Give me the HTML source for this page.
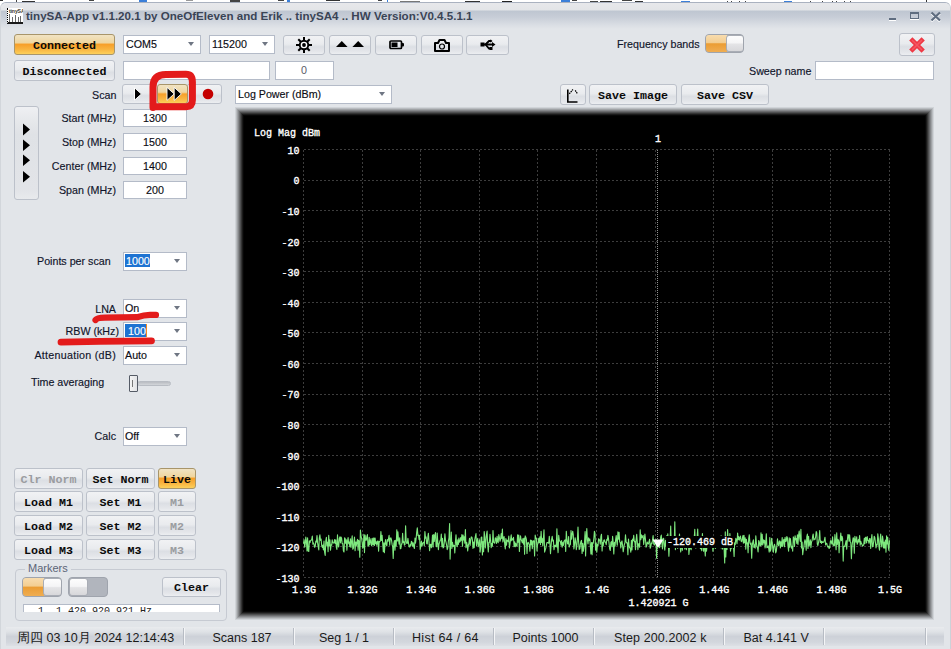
<!DOCTYPE html>
<html><head><meta charset="utf-8">
<style>
*{margin:0;padding:0;box-sizing:border-box}
html,body{width:951px;height:649px;overflow:hidden;background:#fff;font-family:"Liberation Sans",sans-serif}
.a{position:absolute}
#win{position:absolute;left:0;top:2px;width:951px;height:647px;background:#e2e5e9;border-radius:6px 6px 0 0;border-top:1px solid #aab2c0;border-left:1px solid #d2d6db;border-right:1px solid #cdd1d7;overflow:hidden}
#title{position:absolute;left:0;top:0;width:951px;height:26px;background:linear-gradient(#e7e8eb 0px,#e3e5e8 7px,#bec6d1 8px,#c7cdd7 14px,#dadee4 22px,#e2e5e9 26px)}
.btn{position:absolute;border:1px solid #bcc1ca;border-radius:3px;background:linear-gradient(#f1f2f4 0%,#e9ebee 45%,#dcdfe4 60%,#e4e6ea 85%,#eceef1 100%);display:flex;align-items:center;justify-content:center}
.obtn{position:absolute;border:1px solid #a8956a;border-radius:3px;background:linear-gradient(#f1e3c3 0%,#efd6a0 40%,#f7a02a 50%,#f9b440 75%,#fcd05a 100%);display:flex;align-items:center;justify-content:center}
.mono{font-family:"Liberation Mono",monospace;font-weight:700;font-size:11.67px;color:#0a0a0a;white-space:pre;line-height:12px;position:relative;top:1px}
.dis{color:#9a9ca0}
.inp{position:absolute;background:#fff;border:1px solid #b4bbc8}
.lbl{position:absolute;font-size:10.7px;line-height:11px;color:#10142a;white-space:pre;-webkit-text-stroke:0.15px #10142a}
.r{text-align:right}
.val{position:absolute;font-size:10.7px;line-height:11px;color:#0c0c14;white-space:pre;-webkit-text-stroke:0.15px}
.dd:after{content:"";position:absolute;right:6px;top:50%;margin-top:-2.5px;border-left:3.5px solid transparent;border-right:3.5px solid transparent;border-top:4px solid #6f7683}
.tog{position:absolute;border:1px solid #9fa4ad;border-radius:4px;overflow:hidden;background:#b1b5bd}
.tog .on{position:absolute;left:0;top:0;bottom:0;background:linear-gradient(#f8dcae 0%,#f3ce92 44%,#eb9d34 52%,#efad52 100%)}
.tog .knob{position:absolute;top:0;bottom:0;background:linear-gradient(#fdfdfd 0%,#f5f5f6 46%,#e4e4e6 54%,#d8d8db 100%);border:1px solid #a9adb5;border-radius:3px}
.st{position:absolute;top:2px;height:19px;font-size:12.5px;line-height:19px;color:#1a1a1a;white-space:pre}
.sep{position:absolute;top:1px;width:2px;height:17px;border-left:1px solid #b7bcc4;border-right:1px solid #f4f5f7}
</style></head><body>
<!-- top strip fragments -->
<div class="a" style="left:0px;top:0px;width:3px;height:1px;background:#333"></div><div class="a" style="left:16px;top:0px;width:1px;height:2px;background:#444"></div><div class="a" style="left:22px;top:1px;width:13px;height:1px;background:#333"></div><div class="a" style="left:89px;top:0px;width:5px;height:1px;background:#444"></div><div class="a" style="left:139px;top:0px;width:8px;height:2px;background:#3b7fd9"></div><div class="a" style="left:186px;top:0px;width:7px;height:1px;background:#999"></div><div class="a" style="left:230px;top:0px;width:10px;height:2px;background:#444"></div><div class="a" style="left:278px;top:0px;width:6px;height:1px;background:#444"></div><div class="a" style="left:287px;top:0px;width:3px;height:2px;background:#3b7fd9"></div><div class="a" style="left:326px;top:0px;width:14px;height:1px;background:#333"></div><div class="a" style="left:378px;top:0px;width:4px;height:1px;background:#444"></div><div class="a" style="left:387px;top:0px;width:1px;height:2px;background:#3b7fd9"></div><div class="a" style="left:400px;top:1px;width:20px;height:1px;background:#777"></div><div class="a" style="left:465px;top:1px;width:15px;height:1px;background:#333"></div><div class="a" style="left:502px;top:1px;width:10px;height:1px;background:#222"></div><div class="a" style="left:561px;top:0px;width:9px;height:2px;background:#3b7fd9"></div><div class="a" style="left:572px;top:0px;width:5px;height:1px;background:#444"></div><div class="a" style="left:590px;top:1px;width:8px;height:1px;background:#444"></div><div class="a" style="left:600px;top:1px;width:12px;height:1px;background:#333"></div><div class="a" style="left:622px;top:0px;width:10px;height:1px;background:#444"></div><div class="a" style="left:635px;top:1px;width:8px;height:1px;background:#333"></div><div class="a" style="left:681px;top:1px;width:9px;height:1px;background:#3b7fd9"></div><div class="a" style="left:727px;top:1px;width:1px;height:1px;background:#444"></div><div class="a" style="left:731px;top:1px;width:1px;height:1px;background:#444"></div><div class="a" style="left:739px;top:1px;width:1px;height:1px;background:#444"></div><div class="a" style="left:745px;top:1px;width:1px;height:1px;background:#444"></div><div class="a" style="left:784px;top:1px;width:8px;height:1px;background:#3b7fd9"></div><div class="a" style="left:810px;top:1px;width:1px;height:1px;background:#444"></div><div class="a" style="left:822px;top:1px;width:1px;height:1px;background:#444"></div><div class="a" style="left:832px;top:1px;width:1px;height:1px;background:#444"></div><div class="a" style="left:836px;top:1px;width:1px;height:1px;background:#444"></div><div class="a" style="left:844px;top:1px;width:1px;height:1px;background:#444"></div><div class="a" style="left:850px;top:1px;width:1px;height:1px;background:#444"></div><div class="a" style="left:926px;top:0px;width:1px;height:2px;background:#333"></div>

<div id="win">
 <div id="title"></div>
</div>

<!-- title icon -->
<div class="a" style="left:7px;top:8px;width:16px;height:16px;background:#fff;border-left:1px dotted #000;border-bottom:2px solid #1a1a1a;overflow:hidden">
 <div class="a" style="left:1px;top:0;font-size:5.2px;line-height:6px;color:#3a3428;font-weight:700;letter-spacing:-0.15px">tinySA</div>
 <div class="a" style="left:1px;top:6px;width:1px;height:8px;background:#6a6a6a"></div>
 <div class="a" style="left:4px;top:8.5px;width:1px;height:5.5px;background:#6a6a6a"></div>
 <div class="a" style="left:7px;top:7px;width:1px;height:7px;background:#6a6a6a"></div>
 <div class="a" style="left:10px;top:9px;width:1px;height:5px;background:#6a6a6a"></div>
 <div class="a" style="left:12px;top:8px;width:1px;height:6px;background:#6a6a6a"></div>
</div>
<div class="a" style="left:26px;top:10px;font-size:11.6px;line-height:12px;font-weight:700;color:#3a4456;white-space:pre">tinySA-App v1.1.20.1 by OneOfEleven and Erik .. tinySA4 .. HW Version:V0.4.5.1.1</div>
<!-- title buttons -->
<div class="a" style="left:889px;top:18px;width:7px;height:2px;background:#5f6d80;box-shadow:0 1px 0 #fff"></div>
<div class="a" style="left:910px;top:12px;width:9px;height:7px;border:1px solid #5f6d80;border-top-width:2px;box-shadow:0 1px 0 #fff"></div>
<svg class="a" style="left:930px;top:11px" width="12" height="11" viewBox="0 0 12 11"><path d="M1.5 1.5 L10 9.5 M10 1.5 L1.5 9.5" stroke="#fff" stroke-width="2.2" transform="translate(0,1)"/><path d="M1.5 1.5 L10 9.5 M10 1.5 L1.5 9.5" stroke="#5f6d80" stroke-width="2.2"/></svg>

<!-- row 1 -->
<div class="obtn" style="left:14px;top:34px;width:101px;height:21px"><span class="mono">Connected</span></div>
<div class="inp dd" style="left:123px;top:35px;width:78px;height:19px"><span class="val" style="left:2px;top:3px">COM5</span></div>
<div class="inp dd" style="left:209px;top:35px;width:66px;height:19px"><span class="val" style="left:2px;top:3px">115200</span></div>

<div class="btn" style="left:283px;top:35px;width:42px;height:20px">
 <svg width="18" height="18" viewBox="0 0 18 18"><g stroke="#000" stroke-width="2"><line x1="9" y1="1" x2="9" y2="17"/><line x1="1" y1="9" x2="17" y2="9"/><line x1="3.3" y1="3.3" x2="14.7" y2="14.7"/><line x1="14.7" y1="3.3" x2="3.3" y2="14.7"/></g><circle cx="9" cy="9" r="5.2" fill="#000"/><circle cx="9" cy="9" r="3.3" fill="#fff"/><circle cx="9" cy="9" r="1.9" fill="#000"/></svg>
</div>
<div class="btn" style="left:329px;top:35px;width:42px;height:20px">
 <svg style="margin-top:-2px" width="30" height="8" viewBox="0 0 30 8"><path d="M1 7 L6.8 1 L12.6 7Z M17.4 7 L23.2 1 L29 7Z" fill="#000"/></svg>
</div>
<div class="btn" style="left:375px;top:35px;width:42px;height:20px">
 <svg style="margin-left:2px" width="16" height="10" viewBox="0 0 16 10"><rect x="1" y="1" width="11.5" height="7.5" rx="1" fill="none" stroke="#000" stroke-width="1.7"/><rect x="2.5" y="2.5" width="6" height="4.5" fill="#000"/><path d="M12.5 3 L14 3 Q15 3 15 4 L15 5.5 Q15 6.5 14 6.5 L12.5 6.5Z" fill="#000"/></svg>
</div>
<div class="btn" style="left:421px;top:35px;width:42px;height:20px">
 <svg width="16" height="13" viewBox="0 0 16 13"><path d="M1 4 L4 4 L5.5 1 L10.5 1 L12 4 L15 4 L15 12 L1 12 Z" fill="none" stroke="#000" stroke-width="2" stroke-linejoin="round"/><circle cx="8" cy="7.5" r="2.5" fill="none" stroke="#000" stroke-width="1.2"/></svg>
</div>
<div class="btn" style="left:466px;top:35px;width:43px;height:20px">
 <svg width="16" height="12" viewBox="0 0 16 12"><rect x="0.5" y="3.5" width="4" height="4" fill="#000"/><path d="M4 5.5 L13 5.5" stroke="#000" stroke-width="2"/><path d="M12 3 L15.5 5.5 L12 8Z" fill="#000"/><path d="M5.5 5.5 L9 2 L11 2" stroke="#000" stroke-width="1.8" fill="none"/><path d="M10.5 0.3 L12.5 2 L10.5 3.7Z" fill="#000"/><path d="M5.5 5.5 L9 9.5 L10.5 9.5" stroke="#000" stroke-width="1.8" fill="none"/><rect x="9.5" y="8" width="3" height="3" fill="#000"/></svg>
</div>

<div class="lbl" style="left:617px;top:38.5px">Frequency bands</div>
<div class="tog" style="left:705px;top:34px;width:39px;height:19px"><div class="on" style="width:21px"></div><div class="knob" style="left:20px;width:18px;top:0;bottom:0"></div></div>

<div class="btn" style="left:899px;top:33px;width:36px;height:23px">
 <svg width="16" height="16" viewBox="0 0 16 16"><path d="M1.8 1.8 L14.2 14.2 M14.2 1.8 L1.8 14.2" stroke="#ee3844" stroke-width="4.6"/><path d="M3 3 L13 13 M13 3 L3 13" stroke="#f86470" stroke-width="1.6" opacity="0.7"/></svg>
</div>

<!-- row 2 -->
<div class="btn" style="left:14px;top:60px;width:101px;height:21px"><span class="mono" style="top:1.5px">Disconnected</span></div>
<div class="inp" style="left:123px;top:61px;width:147px;height:19px"></div>
<div class="inp" style="left:275px;top:61px;width:59px;height:19px"><span class="val" style="left:0;width:56px;text-align:center;top:3px;color:#5a5a68;-webkit-text-stroke:0">0</span></div>
<div class="lbl" style="left:749px;top:65.5px">Sweep name</div>
<div class="inp" style="left:815px;top:61px;width:119px;height:19px"></div>

<!-- row 3 -->
<div class="lbl" style="left:92px;top:89.5px">Scan</div>
<div class="btn" style="left:122px;top:84px;width:34px;height:20px">
 <svg style="margin-left:-3px" width="10" height="14" viewBox="0 0 10 14"><path d="M1.5 0.8 L8.5 7 L1.5 13.2Z" fill="#000" stroke="#fff" stroke-width="1"/></svg>
</div>
<div class="btn" style="left:186px;top:84px;width:36px;height:20px">
 <svg style="margin-left:7px" width="12" height="12" viewBox="0 0 12 12"><circle cx="6" cy="6" r="5.3" fill="#c40000"/></svg>
</div>
<div class="obtn" style="left:157px;top:84px;width:31px;height:20px">
 <svg style="margin-left:2px;margin-top:-1px" width="17" height="14" viewBox="0 0 17 14"><path d="M2 0.4 L9.2 6.9 L2 13.4Z M9.2 0.4 L16.4 6.9 L9.2 13.4Z" fill="#000" stroke="#fff" stroke-width="0.9"/></svg>
</div>
<div class="inp dd" style="left:235px;top:85px;width:157px;height:19px"><span class="val" style="left:2px;top:3px">Log Power (dBm)</span></div>

<div class="btn" style="left:560px;top:84px;width:26px;height:21px;display:block">
 <svg class="a" style="left:5px;top:3px" width="14" height="16" viewBox="0 0 14 16"><path d="M1.8 1.5 L1.8 14 L11.5 14" fill="none" stroke="#000" stroke-width="1.6"/><path d="M3.3 5.8 L7 1.5 M9.2 2.3 L11.5 5.8" stroke="#000" stroke-width="1.2" stroke-dasharray="1.5 0.7"/></svg>
</div>
<div class="btn" style="left:589px;top:84px;width:88px;height:21px"><span class="mono">Save Image</span></div>
<div class="btn" style="left:681px;top:84px;width:88px;height:21px"><span class="mono">Save CSV</span></div>

<!-- left frequency panel -->
<div class="btn" style="left:14px;top:106px;width:25px;height:94px;display:block;background:linear-gradient(#eff0f3 0%,#e6e8eb 15%,#dfe2e6 30%,#e2e4e8 90%,#e8eaed 100%)">
 <svg class="a" style="left:7px;top:15px" width="9" height="64" viewBox="0 0 9 64"><path d="M1 1.5 L8 7.5 L1 13.5Z M1 17.5 L8 23.3 L1 29Z M1 32.5 L8 38.3 L1 44Z M1 49 L8 54.7 L1 60.5Z" fill="#000"/></svg>
</div>
<div class="lbl r" style="left:20px;width:96px;top:112.5px">Start (MHz)</div>
<div class="lbl r" style="left:20px;width:96px;top:136.5px">Stop (MHz)</div>
<div class="lbl r" style="left:20px;width:96px;top:160.5px">Center (MHz)</div>
<div class="lbl r" style="left:20px;width:96px;top:184.5px">Span (MHz)</div>
<div class="inp" style="left:123px;top:109px;width:64px;height:18px"><span class="val" style="left:0;width:62px;text-align:center;top:3px">1300</span></div>
<div class="inp" style="left:123px;top:133px;width:64px;height:18px"><span class="val" style="left:0;width:62px;text-align:center;top:3px">1500</span></div>
<div class="inp" style="left:123px;top:157px;width:64px;height:18px"><span class="val" style="left:0;width:62px;text-align:center;top:3px">1400</span></div>
<div class="inp" style="left:123px;top:181px;width:64px;height:18px"><span class="val" style="left:0;width:62px;text-align:center;top:3px">200</span></div>

<div class="lbl" style="left:37px;top:255.5px">Points per scan</div>
<div class="inp dd" style="left:123px;top:252px;width:64px;height:19px"><div class="a" style="left:1px;top:1px;width:25px;height:13px;background:#1e73d2"></div><span class="val" style="left:2px;top:3px;color:#fff">1000</span></div>

<div class="lbl r" style="left:20px;width:96px;top:303.5px">LNA</div>
<div class="inp dd" style="left:123px;top:299px;width:64px;height:19px"><span class="val" style="left:1px;top:2.5px">On</span></div>
<div class="lbl r" style="left:20px;width:99px;top:325.7px">RBW (kHz)</div>
<div class="inp dd" style="left:123px;top:322px;width:64px;height:19px"><div class="a" style="left:1px;top:1px;width:22px;height:13px;background:#1e73d2;border-right:1px solid #f08a20"></div><span class="val" style="left:4px;top:3px;color:#fff">100</span></div>
<div class="lbl r" style="left:20px;width:96px;top:349.7px;letter-spacing:0.27px">Attenuation (dB)</div>
<div class="inp dd" style="left:123px;top:346px;width:64px;height:19px"><span class="val" style="left:1px;top:2.5px">Auto</span></div>

<div class="lbl" style="left:31px;top:376.8px">Time averaging</div>
<div class="a" style="left:137px;top:381px;width:34px;height:5px;background:linear-gradient(#b9bcc2,#d3d6da);border:1px solid #b8bcc3;border-radius:3px"></div>
<div class="a" style="left:129px;top:375px;width:9px;height:17px;background:linear-gradient(90deg,#f4f4f4,#e2e3e6);border:1px solid #555b66;border-radius:1px"><div class="a" style="left:2px;top:4px;width:1px;height:7px;background:#777"></div></div>

<div class="lbl r" style="left:20px;width:96px;top:430.7px">Calc</div>
<div class="inp dd" style="left:123px;top:427px;width:64px;height:19px"><span class="val" style="left:1px;top:2.5px">Off</span></div>

<!-- bottom buttons -->
<div class="btn" style="left:14px;top:468px;width:69px;height:21px"><span class="mono dis">Clr Norm</span></div>
<div class="btn" style="left:86px;top:468px;width:69px;height:21px"><span class="mono">Set Norm</span></div>
<div class="obtn" style="left:158px;top:468px;width:38px;height:21px"><span class="mono">Live</span></div>
<div class="btn" style="left:14px;top:491px;width:69px;height:21px"><span class="mono">Load M1</span></div>
<div class="btn" style="left:86px;top:491px;width:69px;height:21px"><span class="mono">Set M1</span></div>
<div class="btn" style="left:158px;top:491px;width:38px;height:21px"><span class="mono dis">M1</span></div>
<div class="btn" style="left:14px;top:515px;width:69px;height:21px"><span class="mono">Load M2</span></div>
<div class="btn" style="left:86px;top:515px;width:69px;height:21px"><span class="mono">Set M2</span></div>
<div class="btn" style="left:158px;top:515px;width:38px;height:21px"><span class="mono dis">M2</span></div>
<div class="btn" style="left:14px;top:539px;width:69px;height:21px"><span class="mono">Load M3</span></div>
<div class="btn" style="left:86px;top:539px;width:69px;height:21px"><span class="mono">Set M3</span></div>
<div class="btn" style="left:158px;top:539px;width:38px;height:21px"><span class="mono dis">M3</span></div>

<!-- markers group -->
<div class="a" style="left:15px;top:569px;width:212px;height:52px;border:1px solid #c6cad2;border-radius:4px"></div>
<div class="a" style="left:25px;top:563px;padding:0 3px;background:#e2e5e9;font-size:11px;line-height:11px;color:#5b6476;white-space:pre">Markers</div>
<div class="tog" style="left:22px;top:577px;width:40px;height:20px"><div class="on" style="width:21px"></div><div class="knob" style="left:20px;width:19px"></div></div>
<div class="tog" style="left:68px;top:577px;width:40px;height:20px"><div class="knob" style="left:0;width:19px"></div></div>
<div class="btn" style="left:162px;top:577px;width:59px;height:20px"><span class="mono">Clear</span></div>
<div class="a" style="left:23px;top:604px;width:197px;height:8px;background:#fff;border:1px solid #b4bbc8;border-bottom:none;overflow:hidden"><div class="a" style="left:14px;top:2px;font-family:'Liberation Mono',monospace;font-size:10px;line-height:10px;color:#222;white-space:pre">1  1.420 920 921 Hz</div></div>

<!-- chart panel -->
<div class="a" style="left:235px;top:107px;width:699px;height:513px;border:1px solid #d0d4d8">
<div style="width:100%;height:100%;border:1px solid #b9bcc0">
<div style="width:100%;height:100%;border:1px solid #9fa2a5">
<div style="width:100%;height:100%;border:1px solid #85878a">
<div style="width:100%;height:100%;border:1px solid #6a6b6d">
<div style="width:100%;height:100%;border:1px solid #4f5051">
<div style="width:100%;height:100%;border:1px solid #343434">
<div style="width:100%;height:100%;border:1px solid #1a1a1a">
<div style="width:100%;height:100%;border:1px solid #070707;background:#000"></div></div></div></div></div></div></div></div></div>
<svg class="a" style="left:0;top:0" width="951" height="649" viewBox="0 0 951 649">
 <g stroke="#3d3d3d" stroke-width="1" stroke-dasharray="2 2" shape-rendering="crispEdges"><line x1="303.5" y1="149.5" x2="303.5" y2="577.5"/><line x1="362.1" y1="149.5" x2="362.1" y2="577.5"/><line x1="420.7" y1="149.5" x2="420.7" y2="577.5"/><line x1="479.3" y1="149.5" x2="479.3" y2="577.5"/><line x1="537.9" y1="149.5" x2="537.9" y2="577.5"/><line x1="596.5" y1="149.5" x2="596.5" y2="577.5"/><line x1="655.1" y1="149.5" x2="655.1" y2="577.5"/><line x1="713.7" y1="149.5" x2="713.7" y2="577.5"/><line x1="772.3" y1="149.5" x2="772.3" y2="577.5"/><line x1="830.9" y1="149.5" x2="830.9" y2="577.5"/><line x1="889.5" y1="149.5" x2="889.5" y2="577.5"/><line x1="303.5" y1="149.5" x2="889.5" y2="149.5"/><line x1="303.5" y1="180.1" x2="889.5" y2="180.1"/><line x1="303.5" y1="210.6" x2="889.5" y2="210.6"/><line x1="303.5" y1="241.2" x2="889.5" y2="241.2"/><line x1="303.5" y1="271.8" x2="889.5" y2="271.8"/><line x1="303.5" y1="302.4" x2="889.5" y2="302.4"/><line x1="303.5" y1="332.9" x2="889.5" y2="332.9"/><line x1="303.5" y1="363.5" x2="889.5" y2="363.5"/><line x1="303.5" y1="394.1" x2="889.5" y2="394.1"/><line x1="303.5" y1="424.6" x2="889.5" y2="424.6"/><line x1="303.5" y1="455.2" x2="889.5" y2="455.2"/><line x1="303.5" y1="485.8" x2="889.5" y2="485.8"/><line x1="303.5" y1="516.4" x2="889.5" y2="516.4"/><line x1="303.5" y1="546.9" x2="889.5" y2="546.9"/><line x1="303.5" y1="577.5" x2="889.5" y2="577.5"/></g>
 <line x1="657.5" y1="150" x2="657.5" y2="577" stroke="#909090" stroke-width="1" stroke-dasharray="1 1" shape-rendering="crispEdges"/>
 <polyline points="303.5,543.7 304.1,539.7 304.7,547.2 305.3,543.5 305.8,537.0 306.4,541.0 307.0,551.0 307.6,537.9 308.2,551.1 308.8,551.4 309.4,540.8 310.0,542.6 310.5,540.7 311.1,540.3 311.7,539.5 312.3,536.1 312.9,544.1 313.5,542.9 314.1,544.7 314.6,547.3 315.2,546.5 315.8,541.1 316.4,542.1 317.0,535.6 317.6,542.9 318.2,546.6 318.8,550.0 319.3,538.0 319.9,534.9 320.5,540.5 321.1,539.1 321.7,545.5 322.3,547.4 322.9,545.1 323.4,549.9 324.0,541.1 324.6,552.2 325.2,555.4 325.8,540.9 326.4,537.3 327.0,546.0 327.6,542.2 328.1,551.6 328.7,535.4 329.3,545.8 329.9,539.9 330.5,550.1 331.1,544.9 331.7,545.1 332.2,539.8 332.8,542.8 333.4,543.0 334.0,542.9 334.6,539.5 335.2,543.5 335.8,539.9 336.3,547.1 336.9,549.4 337.5,534.8 338.1,544.7 338.7,547.0 339.3,538.7 339.9,536.8 340.5,542.9 341.0,537.0 341.6,538.3 342.2,543.8 342.8,543.6 343.4,551.0 344.0,552.0 344.6,537.8 345.1,538.4 345.7,543.4 346.3,539.7 346.9,550.2 347.5,541.3 348.1,537.6 348.7,543.8 349.3,542.1 349.8,546.7 350.4,538.8 351.0,547.5 351.6,541.2 352.2,535.9 352.8,549.3 353.4,548.3 353.9,542.0 354.5,537.1 355.1,550.8 355.7,542.0 356.3,545.7 356.9,541.8 357.5,539.3 358.1,550.1 358.6,540.2 359.2,541.2 359.8,557.3 360.4,530.0 361.0,535.8 361.6,538.5 362.2,542.3 362.7,548.3 363.3,547.0 363.9,534.2 364.5,552.6 365.1,535.0 365.7,540.3 366.3,540.2 366.9,536.4 367.4,534.6 368.0,546.2 368.6,545.7 369.2,537.3 369.8,544.6 370.4,541.4 371.0,538.5 371.5,545.8 372.1,544.4 372.7,538.2 373.3,544.9 373.9,537.9 374.5,545.4 375.1,538.0 375.7,543.6 376.2,541.9 376.8,545.3 377.4,541.0 378.0,541.1 378.6,551.3 379.2,541.4 379.8,541.8 380.3,540.9 380.9,531.5 381.5,540.4 382.1,535.3 382.7,543.5 383.3,551.8 383.9,542.8 384.4,552.8 385.0,543.9 385.6,539.6 386.2,544.5 386.8,545.9 387.4,539.5 388.0,541.3 388.6,538.0 389.1,535.4 389.7,545.1 390.3,538.5 390.9,537.9 391.5,540.0 392.1,544.4 392.7,546.9 393.2,558.4 393.8,543.8 394.4,540.6 395.0,550.2 395.6,540.3 396.2,546.1 396.8,529.7 397.4,540.9 397.9,531.8 398.5,539.6 399.1,544.2 399.7,537.8 400.3,548.7 400.9,548.4 401.5,543.8 402.0,544.0 402.6,533.2 403.2,542.5 403.8,541.4 404.4,545.2 405.0,544.7 405.6,525.7 406.2,541.1 406.7,543.5 407.3,543.4 407.9,538.4 408.5,543.1 409.1,546.8 409.7,547.0 410.3,544.3 410.8,546.0 411.4,541.4 412.0,542.1 412.6,546.2 413.2,542.7 413.8,546.8 414.4,548.5 415.0,538.0 415.5,543.2 416.1,538.9 416.7,532.2 417.3,527.7 417.9,535.4 418.5,535.1 419.1,539.7 419.6,535.4 420.2,549.4 420.8,546.2 421.4,541.0 422.0,546.1 422.6,543.5 423.2,542.5 423.8,542.2 424.3,545.8 424.9,531.6 425.5,538.1 426.1,536.9 426.7,543.8 427.3,543.9 427.9,536.2 428.4,533.2 429.0,541.6 429.6,550.6 430.2,544.5 430.8,544.3 431.4,547.8 432.0,542.8 432.5,535.0 433.1,547.0 433.7,534.5 434.3,541.5 434.9,535.2 435.5,532.5 436.1,546.4 436.7,546.7 437.2,533.1 437.8,542.1 438.4,549.8 439.0,544.0 439.6,542.4 440.2,540.3 440.8,540.0 441.3,534.1 441.9,546.7 442.5,538.4 443.1,547.9 443.7,547.3 444.3,542.6 444.9,533.8 445.5,540.5 446.0,542.2 446.6,545.1 447.2,549.6 447.8,548.0 448.4,541.1 449.0,537.8 449.6,523.5 450.1,559.1 450.7,543.0 451.3,532.0 451.9,548.4 452.5,542.4 453.1,546.4 453.7,545.2 454.3,545.4 454.8,553.0 455.4,542.2 456.0,534.9 456.6,544.8 457.2,546.7 457.8,539.8 458.4,544.5 458.9,538.1 459.5,542.1 460.1,541.6 460.7,537.6 461.3,540.3 461.9,534.6 462.5,546.3 463.1,535.1 463.6,539.9 464.2,536.9 464.8,543.3 465.4,529.6 466.0,547.7 466.6,542.2 467.2,544.9 467.7,550.9 468.3,545.7 468.9,543.1 469.5,538.4 470.1,545.5 470.7,540.2 471.3,536.9 471.9,537.2 472.4,539.9 473.0,548.4 473.6,542.0 474.2,547.8 474.8,539.3 475.4,536.4 476.0,533.6 476.5,545.6 477.1,541.3 477.7,538.3 478.3,546.7 478.9,544.6 479.5,539.8 480.1,552.1 480.6,547.9 481.2,537.4 481.8,537.0 482.4,554.9 483.0,541.5 483.6,551.7 484.2,531.6 484.8,537.0 485.3,547.9 485.9,541.2 486.5,534.3 487.1,531.0 487.7,545.4 488.3,551.9 488.9,542.3 489.4,542.6 490.0,534.3 490.6,540.4 491.2,547.8 491.8,543.3 492.4,546.2 493.0,530.5 493.6,542.3 494.1,542.6 494.7,543.2 495.3,537.9 495.9,538.8 496.5,543.4 497.1,536.3 497.7,541.5 498.2,542.7 498.8,534.6 499.4,537.7 500.0,541.3 500.6,539.4 501.2,533.6 501.8,538.5 502.4,529.1 502.9,541.9 503.5,538.7 504.1,536.5 504.7,544.2 505.3,549.0 505.9,538.5 506.5,545.2 507.0,540.1 507.6,540.6 508.2,541.8 508.8,536.1 509.4,548.0 510.0,543.9 510.6,539.4 511.2,534.8 511.7,540.8 512.3,538.7 512.9,539.6 513.5,537.3 514.1,546.7 514.7,541.8 515.3,546.8 515.8,543.3 516.4,545.6 517.0,546.1 517.6,534.7 518.2,542.3 518.8,535.1 519.4,551.5 520.0,540.2 520.5,535.8 521.1,539.6 521.7,540.9 522.3,542.8 522.9,538.5 523.5,544.3 524.1,538.0 524.6,554.2 525.2,535.9 525.8,537.2 526.4,539.5 527.0,553.5 527.6,543.0 528.2,542.3 528.7,543.4 529.3,545.1 529.9,551.2 530.5,540.1 531.1,544.7 531.7,540.4 532.3,548.8 532.9,541.6 533.4,540.8 534.0,541.1 534.6,556.0 535.2,535.0 535.8,538.5 536.4,538.1 537.0,551.0 537.5,544.5 538.1,543.5 538.7,538.3 539.3,542.7 539.9,536.8 540.5,544.6 541.1,531.2 541.7,542.4 542.2,538.4 542.8,545.9 543.4,538.9 544.0,529.8 544.6,552.1 545.2,550.2 545.8,548.1 546.3,545.6 546.9,542.6 547.5,542.6 548.1,542.8 548.7,543.2 549.3,536.3 549.9,543.6 550.5,553.8 551.0,546.6 551.6,539.6 552.2,536.4 552.8,541.1 553.4,540.2 554.0,549.7 554.6,545.3 555.1,546.6 555.7,545.0 556.3,547.0 556.9,528.8 557.5,545.9 558.1,552.6 558.7,535.4 559.3,540.6 559.8,540.9 560.4,541.9 561.0,545.1 561.6,540.5 562.2,547.2 562.8,542.6 563.4,545.5 563.9,541.4 564.5,540.6 565.1,539.9 565.7,551.4 566.3,531.3 566.9,539.2 567.5,543.8 568.1,544.0 568.6,536.6 569.2,547.0 569.8,544.9 570.4,544.6 571.0,530.5 571.6,539.2 572.2,534.2 572.7,531.2 573.3,534.9 573.9,549.0 574.5,544.7 575.1,537.7 575.7,541.0 576.3,549.7 576.8,546.2 577.4,539.2 578.0,527.1 578.6,542.0 579.2,549.4 579.8,548.9 580.4,543.9 581.0,541.2 581.5,540.4 582.1,553.4 582.7,543.3 583.3,551.3 583.9,547.4 584.5,542.5 585.1,531.6 585.6,555.9 586.2,537.2 586.8,528.5 587.4,539.6 588.0,543.9 588.6,537.9 589.2,540.4 589.8,539.0 590.3,544.9 590.9,554.0 591.5,542.5 592.1,554.6 592.7,542.5 593.3,543.2 593.9,537.8 594.4,531.2 595.0,533.5 595.6,550.2 596.2,543.4 596.8,552.3 597.4,544.6 598.0,545.9 598.6,538.8 599.1,539.1 599.7,540.5 600.3,544.1 600.9,536.3 601.5,534.2 602.1,551.0 602.7,542.4 603.2,546.0 603.8,540.3 604.4,539.9 605.0,542.0 605.6,542.3 606.2,544.7 606.8,539.4 607.4,540.3 607.9,535.4 608.5,538.8 609.1,543.8 609.7,549.1 610.3,550.4 610.9,542.4 611.5,541.6 612.0,546.8 612.6,536.3 613.2,542.7 613.8,553.9 614.4,542.2 615.0,546.2 615.6,540.1 616.2,535.6 616.7,541.1 617.3,545.3 617.9,531.9 618.5,539.1 619.1,532.3 619.7,541.9 620.3,542.6 620.8,548.0 621.4,542.2 622.0,540.9 622.6,545.7 623.2,551.8 623.8,547.6 624.4,544.2 624.9,543.1 625.5,534.9 626.1,541.7 626.7,543.0 627.3,542.8 627.9,554.8 628.5,539.0 629.1,545.5 629.6,547.8 630.2,548.2 630.8,552.1 631.4,540.4 632.0,550.0 632.6,539.1 633.2,540.6 633.7,535.3 634.3,541.6 634.9,541.4 635.5,549.6 636.1,540.0 636.7,534.4 637.3,541.8 637.9,549.8 638.4,544.0 639.0,543.6 639.6,547.3 640.2,529.9 640.8,539.7 641.4,534.9 642.0,537.8 642.5,536.2 643.1,535.5 643.7,544.4 644.3,538.9 644.9,534.0 645.5,539.7 646.1,547.1 646.7,545.9 647.2,542.0 647.8,543.6 648.4,543.9 649.0,542.0 649.6,539.2 650.2,548.3 650.8,546.6 651.3,543.0 651.9,543.7 652.5,540.4 653.1,535.5 653.7,543.8 654.3,545.0 654.9,543.8 655.5,542.0 656.0,539.2 656.6,558.3 657.2,541.4 657.8,543.4 658.4,540.3 659.0,542.5 659.6,547.8 660.1,544.1 660.7,537.2 661.3,535.1 661.9,543.2 662.5,548.9 663.1,538.2 663.7,538.5 664.3,546.5 664.8,550.1 665.4,540.5 666.0,546.1 666.6,535.9 667.2,543.3 667.8,533.7 668.4,544.7 668.9,556.2 669.5,544.6 670.1,539.2 670.7,526.1 671.3,547.1 671.9,541.3 672.5,539.5 673.0,543.6 673.6,538.4 674.2,544.4 674.8,521.8 675.4,549.7 676.0,542.4 676.6,546.6 677.2,545.6 677.7,548.5 678.3,539.5 678.9,541.2 679.5,534.1 680.1,545.5 680.7,552.0 681.3,546.7 681.8,541.1 682.4,550.3 683.0,537.9 683.6,542.3 684.2,536.9 684.8,548.9 685.4,538.1 686.0,547.4 686.5,549.8 687.1,540.9 687.7,542.6 688.3,539.9 688.9,554.4 689.5,548.1 690.1,545.3 690.6,548.6 691.2,549.8 691.8,539.0 692.4,543.5 693.0,542.1 693.6,545.0 694.2,538.4 694.8,529.3 695.3,547.7 695.9,548.0 696.5,544.1 697.1,537.4 697.7,529.1 698.3,542.8 698.9,540.6 699.4,543.2 700.0,547.5 700.6,548.8 701.2,547.3 701.8,550.8 702.4,533.6 703.0,542.6 703.6,551.3 704.1,540.6 704.7,548.0 705.3,556.0 705.9,539.2 706.5,551.1 707.1,544.9 707.7,536.9 708.2,540.0 708.8,544.1 709.4,536.6 710.0,538.9 710.6,547.0 711.2,543.3 711.8,541.8 712.4,540.4 712.9,551.3 713.5,547.2 714.1,541.6 714.7,545.8 715.3,548.5 715.9,547.4 716.5,537.0 717.0,546.1 717.6,545.9 718.2,542.2 718.8,543.6 719.4,544.6 720.0,539.6 720.6,547.6 721.1,535.7 721.7,546.9 722.3,549.2 722.9,547.3 723.5,544.4 724.1,548.1 724.7,563.0 725.3,531.9 725.8,556.9 726.4,536.6 727.0,549.5 727.6,529.5 728.2,541.3 728.8,543.2 729.4,547.8 729.9,533.6 730.5,551.1 731.1,543.8 731.7,548.2 732.3,539.2 732.9,539.9 733.5,547.0 734.1,556.4 734.6,542.9 735.2,544.6 735.8,538.4 736.4,539.6 737.0,543.7 737.6,533.1 738.2,539.6 738.7,536.6 739.3,540.1 739.9,537.7 740.5,536.1 741.1,541.1 741.7,541.6 742.3,538.8 742.9,535.5 743.4,543.3 744.0,535.3 744.6,542.6 745.2,537.9 745.8,549.1 746.4,539.2 747.0,543.7 747.5,542.9 748.1,552.7 748.7,538.5 749.3,534.7 749.9,542.7 750.5,544.4 751.1,543.0 751.7,558.3 752.2,546.3 752.8,541.8 753.4,539.8 754.0,547.5 754.6,544.7 755.2,548.1 755.8,535.9 756.3,542.1 756.9,546.7 757.5,547.6 758.1,551.9 758.7,540.5 759.3,542.0 759.9,546.1 760.5,545.8 761.0,532.8 761.6,544.9 762.2,534.4 762.8,545.0 763.4,539.8 764.0,542.9 764.6,540.4 765.1,547.9 765.7,543.5 766.3,533.7 766.9,547.8 767.5,547.6 768.1,545.8 768.7,548.5 769.2,552.1 769.8,537.6 770.4,551.2 771.0,548.9 771.6,538.3 772.2,542.3 772.8,548.8 773.4,552.3 773.9,546.1 774.5,544.2 775.1,546.9 775.7,552.9 776.3,551.1 776.9,545.4 777.5,538.9 778.0,543.9 778.6,545.8 779.2,541.6 779.8,540.9 780.4,547.9 781.0,541.8 781.6,546.1 782.2,537.6 782.7,546.5 783.3,541.1 783.9,539.2 784.5,546.7 785.1,537.3 785.7,541.4 786.3,541.1 786.8,536.6 787.4,537.8 788.0,546.3 788.6,551.2 789.2,537.7 789.8,547.2 790.4,538.6 791.0,544.2 791.5,548.3 792.1,546.3 792.7,551.2 793.3,536.9 793.9,538.4 794.5,546.5 795.1,535.9 795.6,539.6 796.2,538.5 796.8,543.4 797.4,534.9 798.0,544.4 798.6,535.1 799.2,531.0 799.8,538.5 800.3,541.4 800.9,529.2 801.5,547.9 802.1,542.0 802.7,554.6 803.3,549.7 803.9,547.1 804.4,542.5 805.0,539.7 805.6,542.1 806.2,550.2 806.8,536.9 807.4,534.1 808.0,548.4 808.6,536.2 809.1,545.8 809.7,544.6 810.3,539.7 810.9,547.7 811.5,542.0 812.1,540.6 812.7,535.9 813.2,534.0 813.8,540.0 814.4,538.9 815.0,539.4 815.6,537.1 816.2,531.5 816.8,532.9 817.3,544.1 817.9,545.5 818.5,542.5 819.1,538.9 819.7,530.5 820.3,542.5 820.9,540.9 821.5,543.4 822.0,541.4 822.6,542.5 823.2,542.1 823.8,542.1 824.4,540.2 825.0,537.2 825.6,544.9 826.1,543.6 826.7,543.2 827.3,545.7 827.9,547.1 828.5,546.2 829.1,548.5 829.7,547.6 830.3,541.8 830.8,540.5 831.4,542.7 832.0,544.1 832.6,536.7 833.2,545.4 833.8,544.3 834.4,545.7 834.9,534.5 835.5,540.5 836.1,549.8 836.7,532.9 837.3,544.8 837.9,539.3 838.5,540.4 839.1,552.6 839.6,543.0 840.2,539.9 840.8,533.1 841.4,540.8 842.0,536.2 842.6,538.5 843.2,561.1 843.7,546.8 844.3,546.1 844.9,546.7 845.5,543.7 846.1,540.5 846.7,549.1 847.3,540.8 847.9,534.5 848.4,534.9 849.0,541.2 849.6,534.7 850.2,541.4 850.8,542.7 851.4,558.7 852.0,546.4 852.5,542.1 853.1,537.7 853.7,538.5 854.3,553.2 854.9,536.4 855.5,540.3 856.1,542.3 856.7,536.9 857.2,544.3 857.8,542.7 858.4,539.5 859.0,542.0 859.6,535.6 860.2,545.2 860.8,541.3 861.3,543.3 861.9,544.1 862.5,546.1 863.1,545.2 863.7,545.1 864.3,538.3 864.9,543.6 865.4,537.3 866.0,537.6 866.6,543.0 867.2,536.6 867.8,540.4 868.4,540.4 869.0,543.3 869.6,538.6 870.1,538.5 870.7,548.4 871.3,539.9 871.9,534.5 872.5,546.8 873.1,546.1 873.7,541.2 874.2,536.2 874.8,537.5 875.4,542.0 876.0,548.0 876.6,544.4 877.2,544.9 877.8,533.8 878.4,538.5 878.9,546.4 879.5,550.2 880.1,539.2 880.7,534.1 881.3,544.5 881.9,547.0 882.5,536.1 883.0,539.6 883.6,548.0 884.2,542.0 884.8,548.2 885.4,540.0 886.0,552.1 886.6,535.8 887.2,543.9 887.7,537.4 888.3,547.4 888.9,550.4 889.5,540.2" fill="none" stroke="#7ee87e" stroke-width="1.1" stroke-linejoin="round"/>
 <g font-family="Liberation Mono" font-size="10" fill="#fff" stroke="#fff" stroke-width="0.35">
  <text x="254" y="136">Log Mag dBm</text>
  <text x="299.5" y="153.8" text-anchor="end">10</text><text x="299.5" y="184.4" text-anchor="end">0</text><text x="299.5" y="214.9" text-anchor="end">-10</text><text x="299.5" y="245.5" text-anchor="end">-20</text><text x="299.5" y="276.1" text-anchor="end">-30</text><text x="299.5" y="306.7" text-anchor="end">-40</text><text x="299.5" y="337.2" text-anchor="end">-50</text><text x="299.5" y="367.8" text-anchor="end">-60</text><text x="299.5" y="398.4" text-anchor="end">-70</text><text x="299.5" y="428.9" text-anchor="end">-80</text><text x="299.5" y="459.5" text-anchor="end">-90</text><text x="299.5" y="490.1" text-anchor="end">-100</text><text x="299.5" y="520.7" text-anchor="end">-110</text><text x="299.5" y="551.2" text-anchor="end">-120</text><text x="299.5" y="581.8" text-anchor="end">-130</text>
  <text x="304.0" y="593" text-anchor="middle">1.3G</text><text x="362.6" y="593" text-anchor="middle">1.32G</text><text x="421.2" y="593" text-anchor="middle">1.34G</text><text x="479.8" y="593" text-anchor="middle">1.36G</text><text x="538.4" y="593" text-anchor="middle">1.38G</text><text x="597.0" y="593" text-anchor="middle">1.4G</text><text x="655.6" y="593" text-anchor="middle">1.42G</text><text x="714.2" y="593" text-anchor="middle">1.44G</text><text x="772.8" y="593" text-anchor="middle">1.46G</text><text x="831.4" y="593" text-anchor="middle">1.48G</text><text x="890.0" y="593" text-anchor="middle">1.5G</text>
  <text x="658" y="142" text-anchor="middle">1</text>
  <text x="658.5" y="605.5" text-anchor="middle">1.420921 G</text>
  <rect x="666" y="536" width="68" height="12" fill="#000" stroke="none"/>
  <text x="667" y="545">-120.469 dB</text>
 </g>
 <path d="M652.5 539.5 L663.5 539.5 L658 548Z" fill="#fff"/>
</svg>

<!-- status bar -->
<div class="a" style="left:6px;top:627px;width:938px;height:19px;background:linear-gradient(#e9ebee 0%,#dfe2e6 25%,#cdd1d8 50%,#d3d7dd 80%,#dde0e5 100%)">
 <div class="st" style="left:11px">周四 03 10月 2024 12:14:43</div>
 <div class="sep" style="left:177px"></div>
 <div class="st" style="left:206.5px">Scans 187</div>
 <div class="sep" style="left:287px"></div>
 <div class="st" style="left:313px">Seg 1 / 1</div>
 <div class="sep" style="left:387px"></div>
 <div class="st" style="left:406px;letter-spacing:0.3px">Hist 64 / 64</div>
 <div class="sep" style="left:487px"></div>
 <div class="st" style="left:506.5px">Points 1000</div>
 <div class="sep" style="left:587px"></div>
 <div class="st" style="left:608px;letter-spacing:0.1px">Step 200.2002 k</div>
 <div class="sep" style="left:717px"></div>
 <div class="st" style="left:737.5px">Bat 4.141 V</div>
 <div class="sep" style="left:817px"></div>
 <div class="sep" style="left:919px"></div>
</div>

<!-- red annotations -->
<svg class="a" style="left:0;top:0" width="951" height="649" viewBox="0 0 951 649">
 <path d="M153 107.5 L153 87 Q153 74.6 166 74.6 L186 74.2 Q192.4 74.2 192.4 82 L192.4 100 Q192.4 106.7 186 106.7 L156 106.7" fill="none" stroke="#e31b1b" stroke-width="7" stroke-linecap="round" stroke-linejoin="round"/>
 <path d="M95.5 320 Q97 317.6 105 317.6 L137 317.2 Q144 315 150 314.9 L156 314.9" fill="none" stroke="#e31b1b" stroke-width="6.2" stroke-linecap="round"/>
 <path d="M61 342.2 L100 341.4 L151.5 340.9" fill="none" stroke="#e31b1b" stroke-width="6.8" stroke-linecap="round"/>
</svg>
</body></html>
